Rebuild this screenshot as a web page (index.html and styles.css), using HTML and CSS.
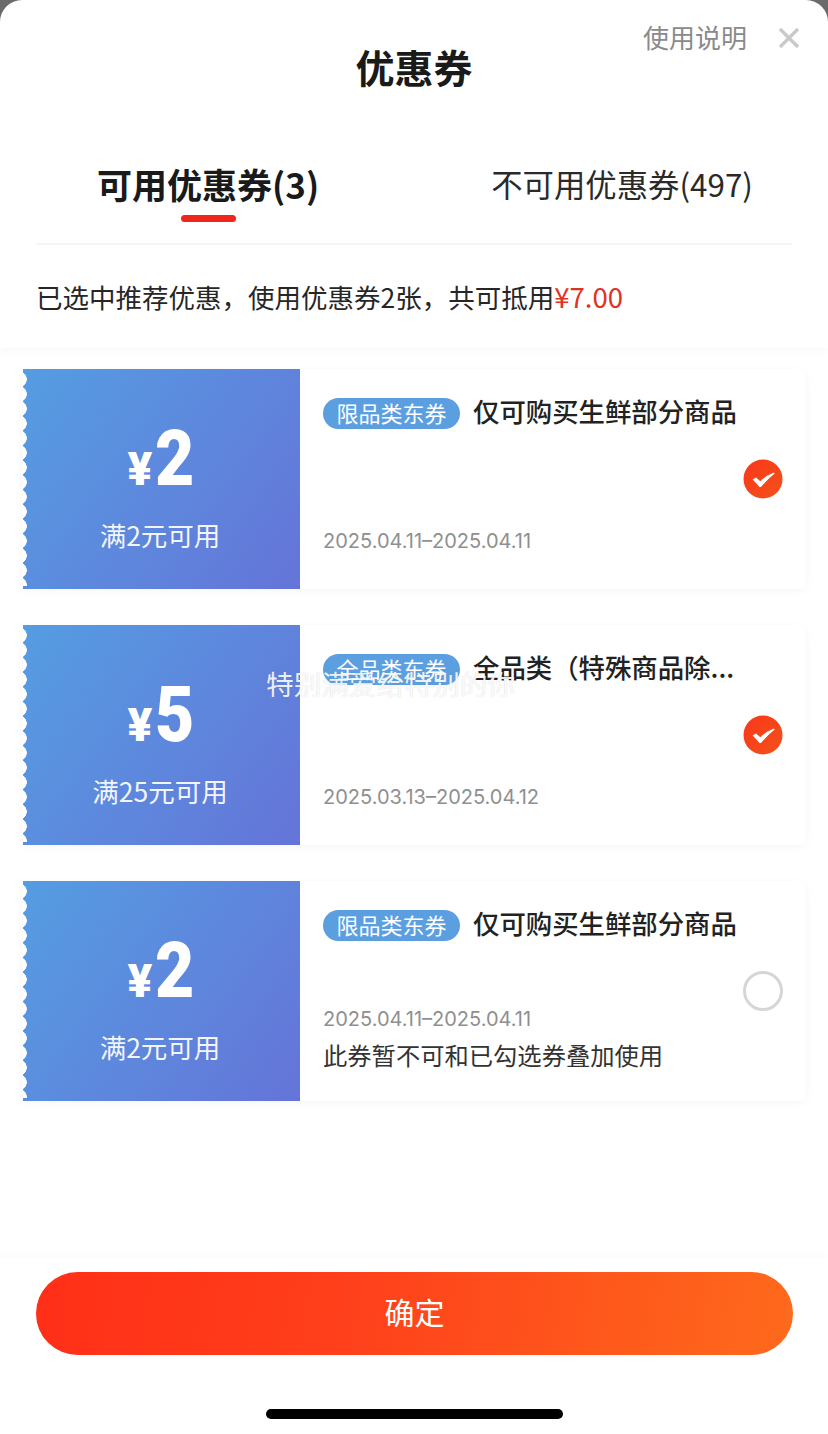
FILE: index.html
```html
<!DOCTYPE html>
<html lang="zh-CN">
<head>
    <meta charset="UTF-8">
    <meta name="viewport" content="width=device-width, initial-scale=1.0">
    <title>优惠券</title>
    <link rel="stylesheet" href="styles.css">
</head>
<body>
    <svg class="defs" width="0" height="0" aria-hidden="true">
        <defs>
            <linearGradient id="check-fill" x1="0" y1="0" x2="1" y2="1">
                <stop offset="0" stop-color="#f9381a"/>
                <stop offset="1" stop-color="#f4511b"/>
            </linearGradient>
        </defs>
    </svg>
    <div class="sheet">
        <header class="header">
            <span></span>
            <h1 class="title">优惠券</h1>
            <div class="actions">
                <span class="help">使用说明</span>
                <svg class="close" width="22" height="22" viewBox="0 0 22 22">
                    <path d="M2 2 L20 20 M20 2 L2 20" stroke="#c9c9c9" stroke-width="3.2" fill="none"/>
                </svg>
            </div>
        </header>

        <div class="tabs">
            <div class="tab tab-active">
                <span>可用优惠券(3)</span>
                <i class="tab-line"></i>
            </div>
            <div class="tab">
                <span>不可用优惠券(497)</span>
            </div>
        </div>

        <div class="summary">已选中推荐优惠，使用优惠券2张，共可抵用<span class="amount">¥7.00</span></div>

        <div class="list">
            <div class="coupon">
                <div class="coupon-left">
                    <div class="price"><span class="yen">¥</span><span class="num">2</span></div>
                    <div class="limit">满2元可用</div>
                </div>
                <div class="coupon-right">
                    <div class="coupon-main">
                        <div class="coupon-head">
                            <span class="tag">限品类东券</span>
                            <span class="name">仅可购买生鲜部分商品</span>
                        </div>
                        <div class="date">2025.04.11–2025.04.11</div>
                    </div>
                    <svg class="check" width="40" height="40" viewBox="0 0 40 40">
                        <circle cx="20" cy="20" r="19.5" fill="url(#check-fill)"/>
                        <path d="M9.5 20.5 L13 18.6 L17.3 22.2 Q23 16.5 31 13.4 L31.6 14.4 Q24 20.5 18 28 L16.4 28 Q13.5 24 9.5 20.5 Z" fill="#fff"/>
                    </svg>
                </div>
            </div>

            <div class="coupon">
                <div class="coupon-left">
                    <div class="price"><span class="yen">¥</span><span class="num">5</span></div>
                    <div class="limit">满25元可用</div>
                </div>
                <div class="coupon-right">
                    <div class="coupon-main">
                        <div class="coupon-head">
                            <span class="tag">全品类东券</span>
                            <span class="name">全品类（特殊商品除...</span>
                        </div>
                        <div class="date">2025.03.13–2025.04.12</div>
                    </div>
                    <svg class="check" width="40" height="40" viewBox="0 0 40 40">
                        <circle cx="20" cy="20" r="19.5" fill="url(#check-fill)"/>
                        <path d="M9.5 20.5 L13 18.6 L17.3 22.2 Q23 16.5 31 13.4 L31.6 14.4 Q24 20.5 18 28 L16.4 28 Q13.5 24 9.5 20.5 Z" fill="#fff"/>
                    </svg>
                </div>
            </div>

            <div class="coupon">
                <div class="coupon-left">
                    <div class="price"><span class="yen">¥</span><span class="num">2</span></div>
                    <div class="limit">满2元可用</div>
                </div>
                <div class="coupon-right">
                    <div class="coupon-main">
                        <div class="coupon-head">
                            <span class="tag">限品类东券</span>
                            <span class="name">仅可购买生鲜部分商品</span>
                        </div>
                        <div class="date">2025.04.11–2025.04.11</div>
                        <div class="note">此券暂不可和已勾选券叠加使用</div>
                    </div>
                    <span class="radio"></span>
                </div>
            </div>
        </div>

        <footer class="footer">
            <button class="confirm">确定</button>
            <div class="home-bar"></div>
        </footer>

        <!-- toast floating over the list -->
        <div class="toast">特别满爱给特别的你</div>
    </div>
</body>
</html>
```

FILE: styles.css
```css
* {
    box-sizing: border-box;
}
html, body {
    margin: 0;
    height: 100%;
}
body {
    font-family: "Noto Sans CJK SC", "Noto Sans", sans-serif;
    background-color: #6a6a6a;
    color: #1f1f1f;
}
.defs {
    position: absolute;
}
.sheet {
    position: relative;
    display: flex;
    flex-direction: column;
    height: 1434px;
    background-color: #fff;
    border-radius: 22px 22px 0 0;
    overflow: hidden;
}
.header {
    display: grid;
    grid-template-columns: 1fr auto 1fr;
    height: 138px;
    flex: none;
}
.title {
    margin: 0;
    font-size: 39px;
    line-height: 132px;
    font-weight: 700;
    color: #1a1a1a;
}
.actions {
    display: flex;
    justify-content: flex-end;
    align-items: center;
    gap: 31px;
    height: 38px;
    margin-top: 19px;
    padding-right: 28px;
}
.help {
    margin-top: -2px;
    font-size: 26px;
    line-height: 38px;
    color: #8a8a8a;
}
.tabs {
    display: flex;
    flex: none;
    height: 107px;
    margin: 0 36px;
    padding-left: 61px;
    gap: 172px;
    border-bottom: 2px solid #f6f6f6;
}
.tab {
    display: flex;
    flex-direction: column;
    align-items: center;
    padding-top: 24px;
    font-size: 31.4px;
    line-height: 44px;
    color: #2a2a2a;
}
.tab-active {
    font-size: 35px;
    font-weight: 700;
    color: #1a1a1a;
}
.tab-line {
    width: 55px;
    height: 7px;
    margin-top: 9px;
    border-radius: 4px;
    background-color: #f0261b;
}
.summary {
    flex: none;
    height: 103px;
    padding: 32px 36px 0;
    font-size: 26.5px;
    line-height: 38px;
    color: #262626;
    background-color: #fff;
    box-shadow: 0 3px 8px rgba(0, 0, 0, 0.03);
    position: relative;
}
.amount {
    font-size: 27.6px;
    color: #e0321f;
}
.list {
    flex: 1;
    display: flex;
    flex-direction: column;
    gap: 36px;
    padding: 21px 22px 0 23px;
}
.coupon {
    display: flex;
    height: 220px;
    border-radius: 8px;
    background-color: #fff;
    box-shadow: 0 2px 10px rgba(0, 0, 0, 0.04);
}
.coupon-left {
    position: relative;
    flex: none;
    width: 277px;
    display: flex;
    flex-direction: column;
    align-items: center;
    padding-right: 3px;
    background: linear-gradient(125deg, #559de2 0%, #6574d8 100%);
}
/* scalloped edge */
.coupon-left::before {
    content: "";
    position: absolute;
    left: 0;
    top: 3px;
    bottom: 3px;
    width: 5px;
    background: radial-gradient(circle at -4px 50%, #fff 7.5px, transparent 8px) 0 0 / 5px 14.7px repeat-y;
}
.price {
    display: flex;
    align-items: baseline;
    justify-content: center;
    height: 118px;
    padding: 34px 0 0 4px;
    color: #fff;
    font-family: Roboto, "Liberation Sans", sans-serif;
    font-weight: 900;
}
.yen {
    font-size: 46px;
    line-height: 112px;
}
.num {
    display: inline-block;
    font-size: 78px;
    line-height: 112px;
    margin-left: 3px;
    margin-right: -4px;
    transform: scaleX(0.87);
    transform-origin: left center;
}
.limit {
    margin-top: 30px;
    font-size: 26.5px;
    line-height: 36px;
    color: #fff;
    opacity: 0.92;
}
.coupon-right {
    flex: 1;
    min-width: 0;
    display: flex;
    align-items: center;
    padding: 0 23px 0 23px;
}
.coupon-main {
    flex: 1;
    min-width: 0;
    display: flex;
    flex-direction: column;
    height: 100%;
    padding: 29px 0 30px;
}
.coupon-head {
    display: flex;
    align-items: flex-start;
    height: 31px;
    margin-bottom: auto;
}
.tag {
    width: 137px;
    height: 31px;
    border-radius: 16px;
    font-size: 22px;
    line-height: 28px;
    text-align: center;
    color: #fff;
    background-color: #5b9fe0;
}
.name {
    margin-left: 13px;
    font-size: 26.4px;
    line-height: 26px;
    font-weight: 500;
    white-space: nowrap;
    color: #222;
}
.date {
    margin-bottom: 4px;
    font-family: Inter, "Liberation Sans", sans-serif;
    font-size: 20px;
    line-height: 28px;
    color: #8f8f8f;
}
.note {
    margin-top: 4px;
    margin-bottom: 2px;
    font-size: 24.3px;
    line-height: 28px;
    color: #333;
}
.check {
    flex: none;
}
.radio {
    flex: none;
    width: 40px;
    height: 40px;
    border: 3px solid #d6d6d6;
    border-radius: 50%;
}
.footer {
    flex: none;
    height: 176px;
    padding: 14px 35px 0 36px;
    background-color: #fff;
    box-shadow: 0 -3px 8px rgba(0, 0, 0, 0.02);
    position: relative;
}
.confirm {
    display: block;
    width: 100%;
    height: 83px;
    padding: 0 0 5px;
    border: 0;
    border-radius: 42px;
    font-family: inherit;
    font-size: 30px;
    color: #fff;
    background: linear-gradient(100deg, #ff2f17 0%, #ff3f1b 40%, #fe6a1c 100%);
}
.home-bar {
    width: 297px;
    height: 10px;
    margin: 54px auto 0;
    border-radius: 5px;
    background-color: #000;
}
.toast {
    position: absolute;
    left: 266px;
    top: 663px;
    font-size: 27.7px;
    line-height: 40px;
    white-space: nowrap;
    color: rgba(255, 255, 255, 0.9);
    text-shadow: 0 0 1px rgba(120, 120, 120, 0.35);
}
```
